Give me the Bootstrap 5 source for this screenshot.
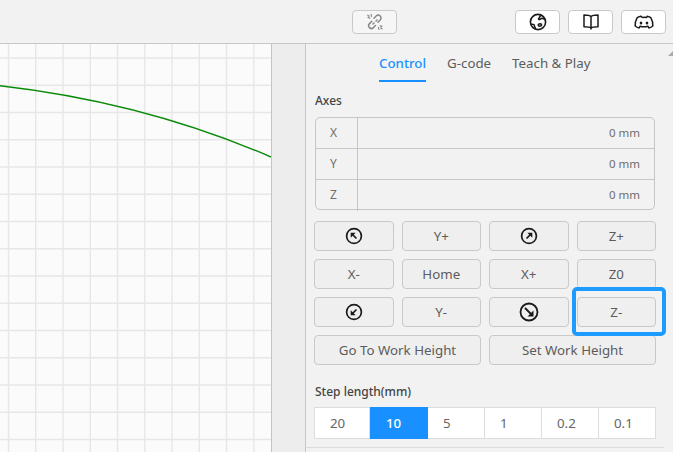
<!DOCTYPE html>
<html lang="en"><head><meta charset="utf-8"><title>Control</title>
<link href="https://cdn.jsdelivr.net/npm/bootstrap@5.3.0/dist/css/bootstrap.min.css" rel="stylesheet">
<style>
html,body{height:100%;overflow:hidden}
body{width:673px;height:452px;background:#f2f2f2;font-family:"Noto Sans","Open Sans","Liberation Sans",sans-serif;font-size:13.3px;color:#595959}
.topbar{height:44px;border-bottom:1px solid #c8c8c8;padding:10px 7px 0 352px;background:#f2f2f2}
.topbtn{width:45px;height:24px;padding:0;border:1px solid #c9c9c9;border-radius:4px;background:#fff;display:flex;align-items:center;justify-content:center}
.topbtn.off{background:#f6f6f6;margin-right:auto}
.workarea{height:408px}
.canvasbox{width:272px;background:#fbfbfb;border-right:1px solid #c4c4c4}
.canvasbox svg{display:block}
.gutter{width:33px;background:#ededed}
.sidepanel{flex:1;border-left:1px solid #c6c6c6;background:#f2f2f2;padding-left:8px;position:relative}
.tabrow{height:38px;padding-left:65px;gap:20px;margin:0;font-size:13.3px}
.tabitem{height:38px;padding-top:10px;line-height:19px;color:#5c5c5c;border-bottom:2px solid transparent;white-space:nowrap}
.tabitem.on{color:#1890ff;font-weight:500;border-bottom-color:#1890ff}
.tabitem.gcode{min-width:46px;text-align:center}
.grouplabel{font-size:12px;line-height:17px;color:#444;font-weight:500;padding-left:1px}
.axeslabel{margin-top:10px}
.axisbox{width:340px;height:93px;margin-left:1px;border:1px solid #c6c6c6;border-radius:5px;margin-top:8px}
.axisrow{height:31px;line-height:29px;font-size:12px;color:#6e6e6e;border-bottom:1px solid #c6c6c6}
.axisrow:last-child{border-bottom:0}
.axisname{width:42px;text-align:left;padding-left:14px;border-right:1px solid #c6c6c6}
.axisval{padding-right:14px;font-size:11.5px;text-align:right}
.padgrid{display:grid;grid-template-columns:repeat(4,1fr);gap:8px;width:342px;margin-top:11px}
.wide{display:grid;grid-template-columns:1fr 1fr;gap:8px;width:342px;margin-top:8px}
.padbtn{height:30px;padding:0;border:1px solid #c9c9c9;border-radius:4px;background:#efefef;color:#5c5c5c;font-size:13.3px;line-height:26px;display:flex;align-items:center;justify-content:center}
.steplabel{margin-top:18px}
.stepbar{width:342px;height:32px;margin-top:7px;background:#fff;border:1px solid #ddd}
.stepcell{flex:1 1 0;padding-left:15px;line-height:30px;font-size:13.3px;color:#666;border-right:1px solid #ddd}
.stepcell:last-child{border-right:0}
.stepcell.first{flex:0 0 55px}
.stepcell.on{flex:0 0 58px;padding-left:16px;background:#1890ff;color:#fff;font-weight:500;border-right:0;margin:-1px 0;line-height:32px}
.endline{position:absolute;left:0;top:403px;width:358px;border-top:1px solid #dcdcdc}
.callout{position:absolute;left:266px;top:243px;width:94px;height:49px;border:4px solid #1e9bff;border-radius:5px;pointer-events:none}
.scrollcaret{position:absolute;right:0;top:7px;width:0;height:0;border-left:5px solid transparent;border-bottom:5px solid #aaa}
</style></head>
<body>
<div class="topbar d-flex gap-2">
<button class="topbtn off" aria-label="Disconnected"><svg width="18" height="18" viewBox="0 0 18 18" fill="none" stroke="#888" stroke-width="1.5" stroke-linecap="round"><path d="M8 5.2 10.2 3a2.8 2.8 0 0 1 4 4L12 9.2M9.5 12.5 7.5 14.6a2.8 2.8 0 0 1-4-4L5.7 8.4M7 11l1-1M10 8l1-1"/><path d="M5 1.5 5.6 3.4M2 4.5l1.9.6M1.8 2.2 3 3.3M13 16.4l-.6-1.9M16 13.4l-1.9-.6M16 15.8l-1.2-1.1" stroke-width="1.2"/></svg></button>
<button class="topbtn" aria-label="Website"><svg width="18" height="18" viewBox="0 0 18 18" fill="none" stroke="#1a1a1a" stroke-width="1.6" stroke-linejoin="round"><circle cx="9" cy="9" r="7.6"/><path d="M11.5 2c.1 1.3-.8 2.1-1.6 3-.7.7-.2 1.6.7 1.5 1-.1 1.4-1.3 2.4-1.2.8.1 1.4.8 3 .8M1.8 11.2c1.500 0 2.500-.2 3.200.5.800.8.100 1.600.800 2.300.500.500.600 1.300.500 2.200M9.500 11.500c.800-1.100 2.500-1 3 0 .300.800-.800 1.700-1.700 1.700-1.200 0-1.900-.8-1.300-1.700Z"/></svg></button>
<button class="topbtn" aria-label="Manual"><svg width="18" height="18" viewBox="0 0 18 18" fill="none" stroke="#1a1a1a" stroke-width="1.5" stroke-linejoin="round"><path d="M9 3.500C7.800 2.300 5.500 2 2 2v11.800c3 0 5.700.1 7 1.300 1.300-1.200 4-1.300 7-1.300V2c-3.500 0-5.800.3-7 1.500ZM9 3.500v13"/></svg></button>
<button class="topbtn" aria-label="Discord"><svg width="20" height="18" viewBox="0 0 20 18" fill="none" stroke="#1a1a1a" stroke-width="1.5" stroke-linejoin="round"><path d="M6.800 3.200C5.300 3.500 4 4 3.200 4.600 1.800 7 1 9.800 1.200 13c1.100 1 2.500 1.700 3.900 2l1-1.800c2.500.7 5.300.7 7.800 0l1 1.800c1.400-.3 2.800-1 3.900-2 .2-3.200-.6-6-2-8.400-.8-.6-2.100-1.100-3.600-1.400l-.6 1.300c-1.400-.2-2.800-.2-4.200 0Z"/><ellipse cx="7" cy="10" rx="1.300" ry="1.500" fill="#1a1a1a" stroke="none"/><ellipse cx="13" cy="10" rx="1.300" ry="1.500" fill="#1a1a1a" stroke="none"/></svg></button>
</div>
<div class="workarea d-flex">
<div class="canvasbox">
<svg width="271" height="408" viewBox="0 44 271 408" stroke="#e7e7e7" stroke-width="1.4" fill="none" role="img" aria-label="Toolpath canvas">
<path d="M8.500 44V452M35.700 44V452M63 44V452M90.300 44V452M117.500 44V452M144.800 44V452M172 44V452M199.300 44V452M226.500 44V452M253.800 44V452"/>
<path d="M0 58H271M0 85.200H271M0 112.500H271M0 139.700H271M0 167H271M0 194.200H271M0 221.500H271M0 248.700H271M0 276H271M0 303.200H271M0 330.500H271M0 357.700H271M0 385H271M0 412.200H271M0 439.500H271"/>
<path d="M0 85.700C90 96 181 118 271 157" stroke="#0a8a0a" stroke-width="1.400"/>
</svg>
</div>
<div class="gutter"></div>
<div class="sidepanel">
<div class="scrollcaret"></div>
<nav class="tabrow d-flex"><div class="tabitem on">Control</div><div class="tabitem gcode">G-code</div><div class="tabitem">Teach &amp; Play</div></nav>
<div class="grouplabel axeslabel">Axes</div>
<div class="axisbox">
<div class="axisrow d-flex"><div class="axisname">X</div><div class="axisval flex-fill">0 mm</div></div>
<div class="axisrow d-flex"><div class="axisname">Y</div><div class="axisval flex-fill">0 mm</div></div>
<div class="axisrow d-flex"><div class="axisname">Z</div><div class="axisval flex-fill">0 mm</div></div>
</div>
<div class="padgrid">
<button class="padbtn" aria-label="Up left"><svg width="20" height="20" viewBox="0 0 20 20" fill="none" stroke="#1a1a1a"><circle cx="10" cy="10" r="7.400" stroke-width="1.700"/><path d="M12.500 12.500 8 8" stroke-width="1.700"/><path d="M6.700 6.700h5l-5 5Z" fill="#1a1a1a" stroke="none"/></svg></button>
<button class="padbtn">Y+</button>
<button class="padbtn" aria-label="Up right"><svg width="20" height="20" viewBox="0 0 20 20" fill="none" stroke="#1a1a1a"><circle cx="10" cy="10" r="7.400" stroke-width="1.700"/><path d="M7.500 12.500 12 8" stroke-width="1.700"/><path d="M13.300 6.700h-5l5 5Z" fill="#1a1a1a" stroke="none"/></svg></button>
<button class="padbtn">Z+</button>
<button class="padbtn">X-</button>
<button class="padbtn">Home</button>
<button class="padbtn">X+</button>
<button class="padbtn">Z0</button>
<button class="padbtn" aria-label="Down left"><svg width="20" height="20" viewBox="0 0 20 20" fill="none" stroke="#1a1a1a"><circle cx="10" cy="10" r="7.400" stroke-width="1.700"/><path d="M12.500 7.500 8 12" stroke-width="1.700"/><path d="M6.700 13.300v-5l5 5Z" fill="#1a1a1a" stroke="none"/></svg></button>
<button class="padbtn">Y-</button>
<button class="padbtn" aria-label="Down right"><svg width="20" height="20" viewBox="0 0 20 20" fill="none" stroke="#1a1a1a"><circle cx="10" cy="10" r="8.500" stroke-width="1.800"/><path d="M6 6l6.500 6.500" stroke-width="1.800"/><path d="M14.500 14.500h-6l6-6Z" fill="#1a1a1a" stroke="none"/></svg></button>
<button class="padbtn">Z-</button>
</div>
<div class="wide"><button class="padbtn">Go To Work Height</button><button class="padbtn">Set Work Height</button></div>
<div class="grouplabel steplabel">Step length(mm)</div>
<div class="stepbar d-flex">
<div class="stepcell first">20</div><div class="stepcell on">10</div><div class="stepcell">5</div><div class="stepcell">1</div><div class="stepcell">0.2</div><div class="stepcell">0.1</div>
</div>
<div class="endline"></div>
<div class="callout"></div>
</div>
</div>
<script src="https://cdn.jsdelivr.net/npm/bootstrap@5.3.0/dist/js/bootstrap.bundle.min.js"></script>
</body></html>
